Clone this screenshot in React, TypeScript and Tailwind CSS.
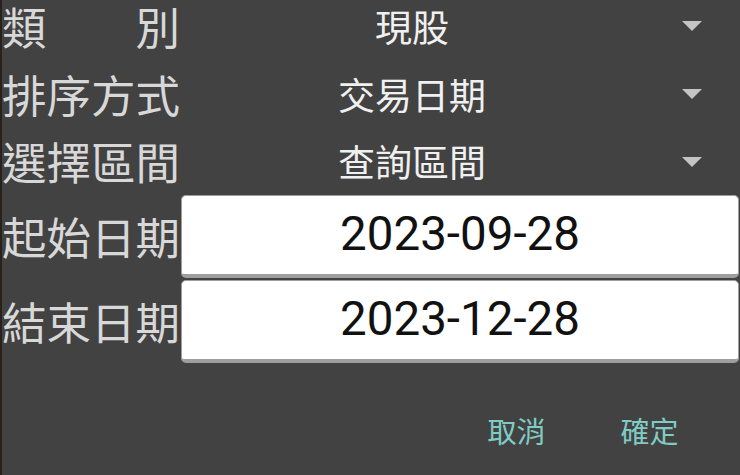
import React from "react";

const cjk = "font-['Noto_Sans_CJK_TC','Noto_Sans',sans-serif]";

const Arrow = () => (
  <svg width="20" height="10" viewBox="0 0 20 10" className="ml-[39px] mr-[38px] shrink-0">
    <polygon points="0,0 20,0 10,10" fill="#c4c4c4" />
  </svg>
);

function SpinnerRow({ label, value, className }: { label: React.ReactNode; value: string; className: string }) {
  return (
    <div className={`flex items-center ${className}`}>
      <div className="w-[179px] shrink-0 text-[44.5px] leading-none whitespace-nowrap text-[#d8d8d8]">{label}</div>
      <div className="flex-1 text-center text-[37px] leading-none text-[#f0f0f0]">{value}</div>
      <Arrow />
    </div>
  );
}

function DateRow({ label, value }: { label: string; value: string }) {
  return (
    <div className="flex items-center h-[83px]">
      <div className="w-[179px] shrink-0 text-[44.5px] leading-none whitespace-nowrap text-[#d8d8d8]">{label}</div>
      <div className="flex-1 mr-[1px] h-full flex items-center justify-center bg-white border border-[#9e9e9e] border-b-[4px] rounded-[5px]">
        <span className="font-['Roboto',sans-serif] text-[47.5px] leading-none text-[#111111]">{value}</span>
      </div>
    </div>
  );
}

export default function App() {
  return (
    <div className={`w-[740px] h-[475px] overflow-hidden bg-[#424242] border-l-2 border-[#2a2119] ${cjk}`}>
      <SpinnerRow
        label={
          <div className="flex justify-between w-[178px]">
            <span>類</span>
            <span>別</span>
          </div>
        }
        value="現股"
        className="h-[60px] pb-[8px]"
      />
      <SpinnerRow label="排序方式" value="交易日期" className="h-[68px]" />
      <SpinnerRow label="選擇區間" value="查詢區間" className="h-[67px]" />
      <div className="flex flex-col gap-[2px]">
        <DateRow label="起始日期" value="2023-09-28" />
        <DateRow label="結束日期" value="2023-12-28" />
      </div>
      <div className="flex justify-end items-center h-[112px] pt-[22px] pr-[24px]">
        <button className="w-[133px] text-center text-[29px] leading-none text-[#80cbc4]">取消</button>
        <button className="w-[133px] text-center text-[29px] leading-none text-[#80cbc4]">確定</button>
      </div>
    </div>
  );
}
